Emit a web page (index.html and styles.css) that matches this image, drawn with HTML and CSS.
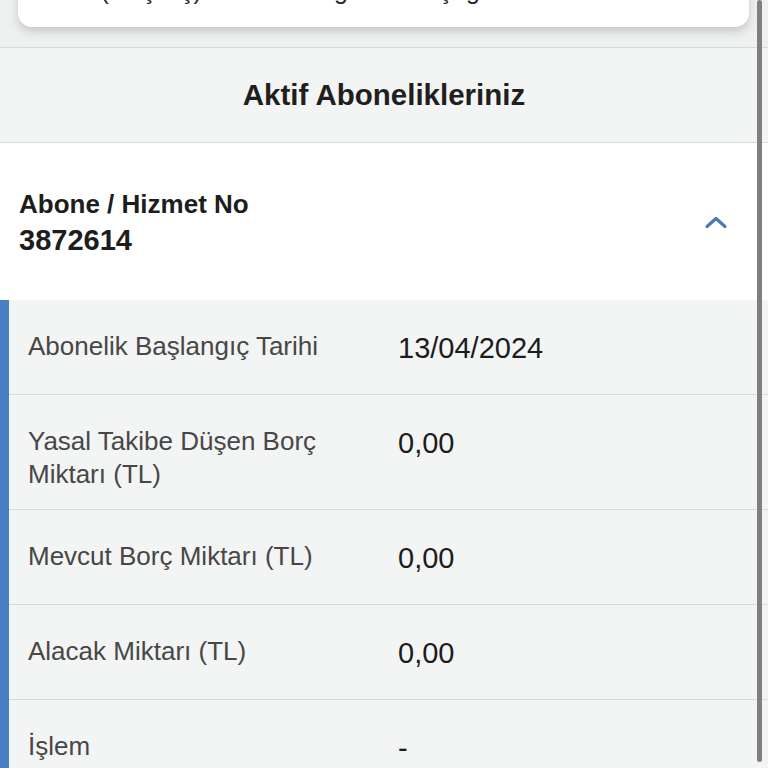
FILE: index.html
```html
<!DOCTYPE html>
<html lang="tr">
<head>
<meta charset="utf-8">
<title>Aktif Abonelikleriniz</title>
<link rel="stylesheet" href="styles.css">
</head>
<body>
<div class="page">
  <div class="top">
    <div class="card"><p class="card-text">Pasif (Geçmiş) abonelik bilgileriniz aşağıda</p></div>
  </div>
  <div class="section-title">Aktif Abonelikleriniz</div>
  <div class="sub-head">
    <div class="sub-info">
      <div class="sub-key">Abone / Hizmet No</div>
      <div class="sub-no">3872614</div>
    </div>
    <svg class="chevron" width="24" height="14" viewBox="0 0 24 14"><polyline points="3,11.5 12,3.5 21,11.5" fill="none" stroke="#4b79b1" stroke-width="3.2" stroke-linecap="round" stroke-linejoin="round"/></svg>
  </div>
  <div class="details">
    <div class="row"><div class="label">Abonelik Başlangıç Tarihi</div><div class="value">13/04/2024</div></div>
    <div class="row"><div class="label">Yasal Takibe Düşen Borç Miktarı (TL)</div><div class="value">0,00</div></div>
    <div class="row"><div class="label">Mevcut Borç Miktarı (TL)</div><div class="value">0,00</div></div>
    <div class="row"><div class="label">Alacak Miktarı (TL)</div><div class="value">0,00</div></div>
    <div class="row"><div class="label">İşlem</div><div class="value">-</div></div>
  </div>
</div>
<div class="scrollbar"></div>
</body>
</html>
```
FILE: styles.css
```css
* { box-sizing: border-box; }
html, body { margin: 0; padding: 0; }
body {
  background: #f2f3f3;
  font-family: "Liberation Sans", Arial, sans-serif;
  overflow: hidden;
  height: 768px;
}
.page { width: 768px; }
.top {
  height: 48px;
  padding: 0 19px 0 18px;
  border-bottom: 1px solid #d8dadb;
  background: #eff0f0;
  overflow: hidden;
}
.card {
  margin-top: -40px;
  height: 67px;
  background: #ffffff;
  border-radius: 14px;
  box-shadow: 0 5px 10px rgba(60, 70, 80, 0.22);
  padding: 15px 20px 0 20px;
}
.card-text {
  margin: 0;
  font-size: 25px;
  line-height: 30px;
  color: #2a2a2a;
  white-space: nowrap;
}
.section-title {
  height: 95px;
  display: flex;
  align-items: center;
  justify-content: center;
  font-size: 29.5px;
  font-weight: bold;
  color: #1f1f1f;
  background: #f3f4f4;
  border-bottom: 1px solid #d8dadb;
  padding-bottom: 1px;
}
.sub-head {
  height: 157px;
  background: #ffffff;
  display: flex;
  align-items: center;
  justify-content: space-between;
  padding: 3px 40px 0 19px;
}
.sub-key {
  font-size: 26px;
  line-height: 34px;
  font-weight: bold;
  color: #1d1d1d;
}
.sub-no {
  font-size: 29px;
  line-height: 38px;
  font-weight: bold;
  color: #1d1d1d;
}
.chevron { display: block; margin-top: -3px; }
.details {
  background: #f3f4f4;
  border-left: 9px solid #4a7fc2;
}
.row {
  display: grid;
  grid-template-columns: 350px 1fr;
  column-gap: 20px;
  align-items: start;
  min-height: 95px;
  padding: 30px 0 18px 19px;
  border-bottom: 1px solid #d8dadb;
}
.label {
  font-size: 26px;
  line-height: 33px;
  color: #474747;
}
.value {
  font-size: 29px;
  line-height: 33px;
  padding-top: 2px;
  color: #1c1c1c;
}
.scrollbar {
  position: fixed;
  top: 0;
  right: 6px;
  width: 5px;
  height: 762px;
  border-radius: 3px;
  background: #7f7f7f;
}
```
